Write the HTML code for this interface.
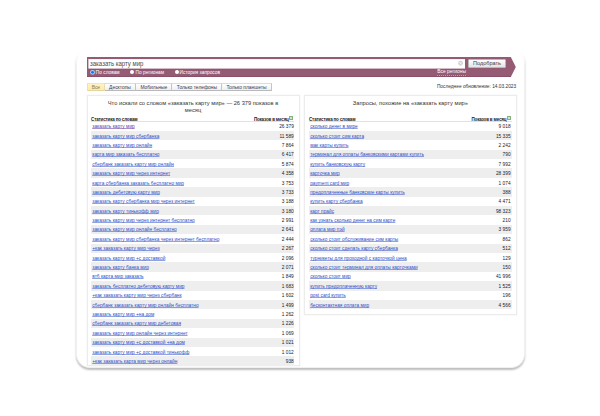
<!DOCTYPE html>
<html><head><meta charset="utf-8">
<style>
*{box-sizing:border-box;margin:0;padding:0}
html,body{width:600px;height:416px;overflow:hidden;background:#fff}
body{position:relative;font-family:"Liberation Sans",sans-serif;color:#333}
.abs{position:absolute}
#card{left:76px;top:52px;width:448.5px;height:316px;border-radius:9px 9px 14px 14px;background:#fff;border:1px solid #f0f0f0;border-top-color:#fff;box-shadow:0 1.3px 2px rgba(0,0,0,.26)}
#bar{left:0;top:0}
#inp{left:88.5px;top:59px;width:376.5px;height:8.8px;background:#fff;}
#inptxt{left:90px;top:59.2px;font-size:6.7px;line-height:9px;color:#4a4a4a;white-space:nowrap;transform:scaleX(0.9);transform-origin:0 0}
#clr{left:458.3px;top:61px;width:4.8px;height:4.8px;border-radius:50%;border:0.8px solid #c8c8c8}
#btn{left:468.4px;top:59px;width:37.3px;height:9px;border:0.7px solid #b9b9b9;border-radius:1px;background:linear-gradient(#fff,#e4e4e4);}
#btntxt{left:468.4px;top:59px;width:37.3px;font-size:5.56px;line-height:9px;text-align:center;color:#3c3c48;white-space:nowrap}
.radio{width:4.3px;height:4.3px;border-radius:50%;background:#fff;top:70.2px}
.rtxt{font-size:4.8px;line-height:6px;top:69.5px;color:#fff;white-space:nowrap}
#allreg{left:437.3px;top:69.3px;font-size:4.9px;line-height:5.6px;color:#fff;white-space:nowrap;border-bottom:1px dotted rgba(255,255,255,.4)}
.tab{top:82.5px;height:8.2px;border-top:0.6px solid #dcdcdc;border-bottom:0.8px solid #b9b9b9;border-right:0.7px solid #c4c4c4;background:linear-gradient(#fff,#efefef);font-size:4.9px;line-height:7.8px;text-align:center;color:#3a3a50;white-space:nowrap}
#upd{left:436.9px;top:83.8px;font-size:4.81px;line-height:6px;color:#333;white-space:nowrap}
.panel{top:95px;border:1px solid #ececec;background:#fff;box-shadow:0 0 1px rgba(0,0,0,.12)}
.title{position:absolute;left:0;right:0;top:3.9px;text-align:center;font-size:5.73px;line-height:6.9px;color:#333}
.hdr{position:absolute;top:20.2px;height:5.6px;border-bottom:0.8px solid #dfe1ea;font-size:4.5px;font-weight:bold;letter-spacing:-0.17px;line-height:7.3px;color:#222;white-space:nowrap}
.hdr .rt{position:absolute;right:5.4px;top:-0.3px}
.hdr .ic{position:absolute;right:0.9px;top:-0.2px;width:3.8px;height:3.6px;background:#cfe3c8;border:0.6px solid #86b07e}
.rows{position:absolute;top:25.5px}
.r{height:9.396px;position:absolute;left:0;right:0;font-size:4.8px;line-height:9.396px;white-space:nowrap}
.r.g{background:#eeeeee}
.r a{position:relative;top:0.65px;color:#3050c8;text-decoration:underline;text-decoration-color:rgba(70,100,205,.6);text-decoration-thickness:1px;text-underline-offset:-0.3px;text-decoration-skip-ink:none;margin-left:1.1px}
.rr .r .n{right:1.1px}
.r a.v{color:#6a42a8;text-decoration-color:rgba(110,70,170,.6)}
.r .n{position:absolute;right:0.3px;top:0.65px;color:#222}
</style></head><body>
<div id="card" class="abs"></div>
<div class="abs" style="left:70px;top:44px;width:460px;height:22px;background:linear-gradient(#fff 35%,rgba(255,255,255,0))"></div>
<svg class="abs" id="bar" width="600" height="416" viewBox="0 0 600 416">
<polygon points="87,57 510.8,57 515.8,67 510.8,77 87,77" fill="#955b74"/>
<rect x="87" y="76" width="424" height="1" fill="#8a4e69"/>
<rect x="88.4" y="68.6" width="376.6" height="1" fill="#86496a" opacity=".55"/>
<rect x="88.4" y="59" width="376.6" height="9.6" fill="#fff"/>
<rect x="88.4" y="59" width="376.6" height="0.6" fill="#ddd" opacity=".6"/>
<circle cx="92.5" cy="72.35" r="2.45" fill="#a9d0fb"/>
<circle cx="92.5" cy="72.35" r="1.45" fill="#0b78f2"/>
</svg>

<div id="inptxt" class="abs">заказать карту мир</div>

<div id="btn" class="abs"></div>
<svg class="abs" style="left:0;top:0" width="600" height="416" viewBox="0 0 600 416">
<circle cx="460.5" cy="63.3" r="2.45" fill="#d4d4d4"/>
<path d="M459.4 62.2 L461.6 64.4 M461.6 62.2 L459.4 64.4" stroke="#fff" stroke-width="0.6"/>
</svg>
<div id="btntxt" class="abs">Подобрать</div>
<div class="abs rtxt" style="left:95.8px">По словам</div>
<div class="abs radio" style="left:129.8px"></div>
<div class="abs rtxt" style="left:135.6px">По регионам</div>
<div class="abs radio" style="left:174.6px"></div>
<div class="abs rtxt" style="left:179.6px">История запросов</div>
<div id="allreg" class="abs">Все регионы</div>

<div class="abs tab" style="left:87px;width:17.7px;background:linear-gradient(#fff4c6,#ffeaa6);border-left:0.7px solid #ebe0b8;border-top-color:#efe6c0;border-bottom-color:#e6d49a;border-right-color:#e8dcb0;color:#857a58">Все</div>
<div class="abs tab" style="left:104.7px;width:31.6px">Десктопы</div>
<div class="abs tab" style="left:136.3px;width:36.1px">Мобильные</div>
<div class="abs tab" style="left:172.4px;width:50px">Только телефоны</div>
<div class="abs tab" style="left:222.4px;width:49.2px">Только планшеты</div>
<div id="upd" class="abs">Последнее обновление: 14.03.2023</div>

<div class="abs panel" style="left:86.5px;width:213px;height:271.2px">
 <div class="title">Что искали со словом «заказать карту мир» — 26 379 показов в<br>месяц</div>
 <div class="hdr" style="left:3.6px;width:203px">Статистика по словам<span class="rt">Показов в месяц</span><span class="ic"></span></div>
 <div class="rows" style="left:3.6px;width:203px">
<div class="r" style="top:0.000px"><a class="v">заказать карту мир</a><span class="n">26 379</span></div>
<div class="r g" style="top:9.396px"><a>заказать карту мир сбербанка</a><span class="n">11 589</span></div>
<div class="r" style="top:18.792px"><a>заказать карту мир онлайн</a><span class="n">7 864</span></div>
<div class="r g" style="top:28.188px"><a>карта мир заказать бесплатно</a><span class="n">6 417</span></div>
<div class="r" style="top:37.584px"><a>сбербанк заказать карту мир онлайн</a><span class="n">5 874</span></div>
<div class="r g" style="top:46.980px"><a>заказать карту мир через интернет</a><span class="n">4 358</span></div>
<div class="r" style="top:56.376px"><a>карта сбербанка заказать бесплатно мир</a><span class="n">3 753</span></div>
<div class="r g" style="top:65.772px"><a>заказать дебетовую карту мир</a><span class="n">3 733</span></div>
<div class="r" style="top:75.168px"><a>заказать карту сбербанка мир через интернет</a><span class="n">3 188</span></div>
<div class="r g" style="top:84.564px"><a>заказать карту тинькофф мир</a><span class="n">3 180</span></div>
<div class="r" style="top:93.960px"><a>заказать карту мир через интернет бесплатно</a><span class="n">2 991</span></div>
<div class="r g" style="top:103.356px"><a>заказать карту мир онлайн бесплатно</a><span class="n">2 641</span></div>
<div class="r" style="top:112.752px"><a>заказать карту мир сбербанка через интернет бесплатно</a><span class="n">2 444</span></div>
<div class="r g" style="top:122.148px"><a>+как заказать карту мир через</a><span class="n">2 267</span></div>
<div class="r" style="top:131.544px"><a>заказать карту мир +с доставкой</a><span class="n">2 096</span></div>
<div class="r g" style="top:140.940px"><a>заказать карту банка мир</a><span class="n">2 071</span></div>
<div class="r" style="top:150.336px"><a>втб карта мир заказать</a><span class="n">1 849</span></div>
<div class="r g" style="top:159.732px"><a>заказать бесплатно дебетовую карту мир</a><span class="n">1 683</span></div>
<div class="r" style="top:169.128px"><a>+как заказать карту мир через сбербанк</a><span class="n">1 602</span></div>
<div class="r g" style="top:178.524px"><a>сбербанк заказать карту мир онлайн бесплатно</a><span class="n">1 499</span></div>
<div class="r" style="top:187.920px"><a>заказать карту мир +на дом</a><span class="n">1 262</span></div>
<div class="r g" style="top:197.316px"><a>сбербанк заказать карту мир дебетовая</a><span class="n">1 226</span></div>
<div class="r" style="top:206.712px"><a>заказать карту мир онлайн через интернет</a><span class="n">1 069</span></div>
<div class="r g" style="top:216.108px"><a>заказать карту мир +с доставкой +на дом</a><span class="n">1 021</span></div>
<div class="r" style="top:225.504px"><a>заказать карту мир +с доставкой тинькофф</a><span class="n">1 012</span></div>
<div class="r g" style="top:234.900px"><a>+как заказать карта мир через онлайн</a><span class="n">938</span></div>
 </div>
</div>
<div class="abs panel" style="left:304.2px;width:212.4px;height:220.3px">
 <div class="title">Запросы, похожие на «заказать карту мир»</div>
 <div class="hdr" style="left:3.85px;width:202.7px">Статистика по словам<span class="rt">Показов в месяц</span><span class="ic"></span></div>
 <div class="rows rr" style="left:3.85px;width:202.7px">
<div class="r" style="top:0.000px"><a>сколько денег в мире</a><span class="n">9 018</span></div>
<div class="r g" style="top:9.396px"><a>сколько стоит сим карта</a><span class="n">15 335</span></div>
<div class="r" style="top:18.792px"><a>мак карты купить</a><span class="n">2 242</span></div>
<div class="r g" style="top:28.188px"><a>терминал для оплаты банковскими картами купить</a><span class="n">790</span></div>
<div class="r" style="top:37.584px"><a>купить банковскую карту</a><span class="n">7 992</span></div>
<div class="r g" style="top:46.980px"><a>карточка мир</a><span class="n">28 399</span></div>
<div class="r" style="top:56.376px"><a>payment card мир</a><span class="n">1 074</span></div>
<div class="r g" style="top:65.772px"><a>предоплаченные банковские карты купить</a><span class="n">388</span></div>
<div class="r" style="top:75.168px"><a>купить карту сбербанка</a><span class="n">4 471</span></div>
<div class="r g" style="top:84.564px"><a>карт прайс</a><span class="n">98 323</span></div>
<div class="r" style="top:93.960px"><a>как узнать сколько денег на сим карте</a><span class="n">210</span></div>
<div class="r g" style="top:103.356px"><a>оплата мир пэй</a><span class="n">3 959</span></div>
<div class="r" style="top:112.752px"><a>сколько стоит обслуживание сим карты</a><span class="n">862</span></div>
<div class="r g" style="top:122.148px"><a>сколько стоит сделать карту сбербанка</a><span class="n">512</span></div>
<div class="r" style="top:131.544px"><a>турникеты для проходной с карточкой цена</a><span class="n">129</span></div>
<div class="r g" style="top:140.940px"><a>сколько стоит терминал для оплаты карточками</a><span class="n">150</span></div>
<div class="r" style="top:150.336px"><a>сколько стоит мир</a><span class="n">41 996</span></div>
<div class="r g" style="top:159.732px"><a>купить предоплаченную карту</a><span class="n">1 525</span></div>
<div class="r" style="top:169.128px"><a>post card купить</a><span class="n">196</span></div>
<div class="r g" style="top:178.524px"><a>бесконтактная оплата мир</a><span class="n">4 566</span></div>
 </div>
</div>
</body></html>
